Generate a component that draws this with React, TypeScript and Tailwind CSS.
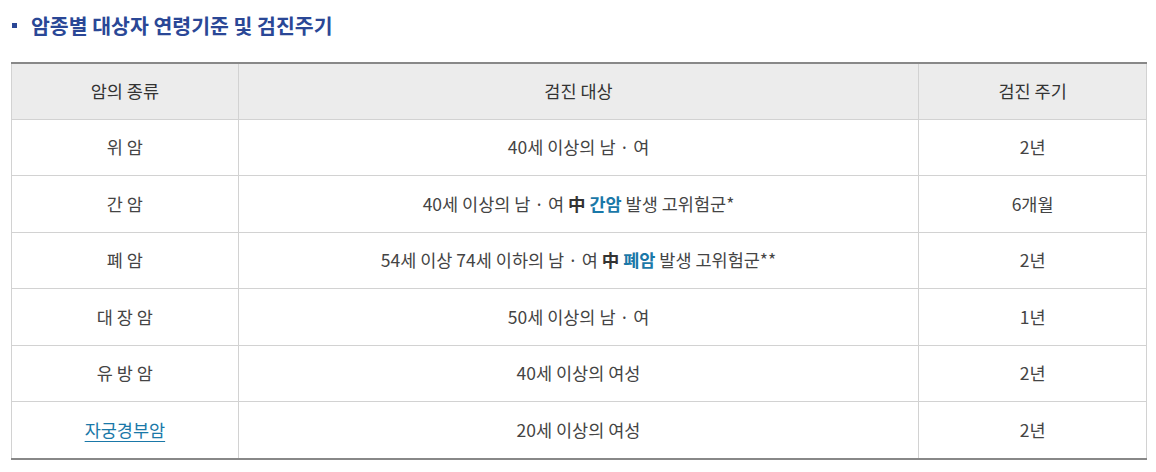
const rows: { type: React.ReactNode; target: React.ReactNode; cycle: string }[] = [
  { type: '위 암', target: '40세 이상의 남 · 여', cycle: '2년' },
  {
    type: '간 암',
    target: (
      <>
        40세 이상의 남 · 여 <b className="font-bold text-[#333]">中</b>{' '}
        <b className="font-bold text-[#1a78a8]">간암</b> 발생 고위험군*
      </>
    ),
    cycle: '6개월',
  },
  {
    type: '폐 암',
    target: (
      <>
        54세 이상 74세 이하의 남 · 여 <b className="font-bold text-[#333]">中</b>{' '}
        <b className="font-bold text-[#1a78a8]">폐암</b> 발생 고위험군**
      </>
    ),
    cycle: '2년',
  },
  { type: '대 장 암', target: '50세 이상의 남 · 여', cycle: '1년' },
  { type: '유 방 암', target: '40세 이상의 여성', cycle: '2년' },
  {
    type: (
      <a href="#" className="text-[#1a78a8] underline underline-offset-4">
        자궁경부암
      </a>
    ),
    target: '20세 이상의 여성',
    cycle: '2년',
  },
]

export default function App() {
  return (
    <div
      className="w-[1156px] h-[472px] bg-white text-[#444]"
      style={{ fontFamily: '"Noto Sans CJK KR", "Noto Sans", sans-serif' }}
    >
      <h2 className="flex items-center gap-[14px] pl-[12px] h-[50px] text-[20.5px] font-bold text-[#2a4796] leading-none">
        <span className="w-[5px] h-[5px] bg-[#2a4796]" />
        암종별 대상자 연령기준 및 검진주기
      </h2>

      <div className="ml-[11px] mt-[12px] w-[1136px] border-t-2 border-b-2 border-t-[#888] border-b-[#888]">
        <table className="w-full border-collapse text-[17.5px]">
          <colgroup>
            <col className="w-[227px]" />
            <col className="w-[681px]" />
            <col className="w-[228px]" />
          </colgroup>
          <thead>
            <tr className="h-[55px] bg-[#ececec] text-[#333]">
              <th className="font-normal border-l border-r border-[#d2d2d2]">암의 종류</th>
              <th className="font-normal border-r border-[#d2d2d2]">검진 대상</th>
              <th className="font-normal border-r border-[#d2d2d2]">검진 주기</th>
            </tr>
          </thead>
          <tbody>
            {rows.map((r, i) => (
              <tr key={i} className="h-[56.5px] border-t border-[#d2d2d2] text-center">
                <td className="border-l border-r border-[#d2d2d2]">{r.type}</td>
                <td className="border-r border-[#d2d2d2]">{r.target}</td>
                <td className="border-r border-[#d2d2d2]">{r.cycle}</td>
              </tr>
            ))}
          </tbody>
        </table>
      </div>
    </div>
  )
}
